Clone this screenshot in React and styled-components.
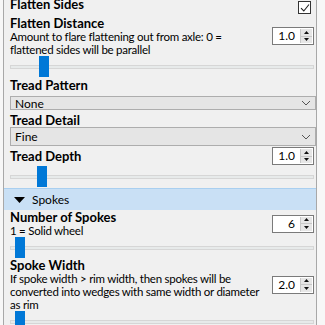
import React from "react";
import styled, { createGlobalStyle } from "styled-components";

const Global = createGlobalStyle`
  html, body {
    margin: 0;
    padding: 0;
    background: #f7f7f7;
    overflow: hidden;
  }
  body {
    font-family: Lato, "Liberation Sans", sans-serif;
    color: #000;
  }
`;

const Panel = styled.div`
  margin-left: 3px;
  width: 312px;
  height: 325px;
  overflow: hidden;
  background: #f0f0f0;
  border-left: 1px solid #a8a8a8;
  border-right: 1px solid #a8a8a8;
`;

const Scroll = styled.div`
  margin-top: -3px;
`;

const Section = styled.div`
  padding: 0 2px 0 6px;
`;

const Field = styled.div`
  display: grid;
  grid-template-columns: 1fr auto;
  column-gap: 6px;
  align-items: center;
  margin-top: ${(p) => p.$top || 0}px;
`;

const Title = styled.div`
  font-weight: 700;
  font-size: 13px;
  line-height: 14px;
  margin-top: ${(p) => p.$top || 0}px;
`;

const Desc = styled.div`
  font-size: 11.5px;
  line-height: 13px;
  letter-spacing: -0.25px;
`;

const CheckBox = styled.div`
  align-self: end;
  width: 11px;
  height: 11px;
  margin: 0 3px -3px 0;
  border: 1px solid #333;
  background: #fff;
  display: flex;
  align-items: center;
  justify-content: center;
`;

const Spin = styled.div`
  display: flex;
  width: 40px;
  height: 16px;
  border: 1px solid #7a7a7a;
  background: #fff;
`;

const SpinValue = styled.div`
  flex: 1;
  font-size: 12px;
  line-height: 16px;
  text-align: right;
  padding-right: 4px;
`;

const SpinArrows = styled.div`
  width: 11px;
  display: flex;
  flex-direction: column;
  border-left: 1px solid #c8c8c8;
  background: #e6e6e6;
  margin: 1px;
`;

const Arrow = styled.div`
  flex: 1;
  display: flex;
  align-items: center;
  justify-content: center;
  & + & {
    border-top: 1px solid #c8c8c8;
  }
`;

const Slider = styled.div`
  position: relative;
  height: 21px;
  margin-top: ${(p) => p.$top || 0}px;
`;

const Track = styled.div`
  position: absolute;
  left: 0;
  right: 0;
  top: 9px;
  height: 2px;
  background: #e7eaea;
  border: 1px solid #d6d6d6;
`;

const Thumb = styled.div`
  position: absolute;
  top: 0;
  width: 10px;
  height: 21px;
  background: #0078d7;
`;

const Combo = styled.div`
  display: flex;
  align-items: center;
  justify-content: space-between;
  height: ${(p) => p.$h}px;
  margin: ${(p) => p.$mt}px -2px 0 0;
  padding: 0 4px;
  background: #e5e5e5;
  border: 1px solid #adadad;
  font-size: 12px;
`;

const Header = styled.div`
  display: flex;
  align-items: center;
  gap: 7px;
  height: 21px;
  margin-top: 1px;
  padding-left: 10px;
  background: #c9e0f5;
  border-top: 1px solid #a9cff0;
  font-size: 12px;
`;

const Check = () => (
  <svg width="10" height="10" viewBox="0 0 10 10">
    <path d="M1 5.2 L3.8 8 L9 1.5" fill="none" stroke="#222" strokeWidth="1.1" />
  </svg>
);

const Chevron = () => (
  <svg width="10" height="6" viewBox="0 0 10 6">
    <path d="M1 1 L5 5 L9 1" fill="none" stroke="#555" strokeWidth="1" />
  </svg>
);

const SpinBox = ({ value }) => (
  <Spin>
    <SpinValue>{value}</SpinValue>
    <SpinArrows>
      <Arrow>
        <svg width="5" height="3" viewBox="0 0 5 3">
          <path d="M0 3 L2.5 0 L5 3 Z" fill="#111" />
        </svg>
      </Arrow>
      <Arrow>
        <svg width="5" height="3" viewBox="0 0 5 3">
          <path d="M0 0 L2.5 3 L5 0 Z" fill="#111" />
        </svg>
      </Arrow>
    </SpinArrows>
  </Spin>
);

const Range = ({ at, top }) => (
  <Slider $top={top}>
    <Track />
    <Thumb style={{ left: at }} />
  </Slider>
);

export default function App() {
  return (
    <>
      <Global />
      <Panel>
        <Scroll>
          <Section>
            <Field>
              <Title>Flatten Sides</Title>
              <CheckBox>
                <Check />
              </CheckBox>
            </Field>
            <Field $top={5}>
              <div>
                <Title>Flatten Distance</Title>
                <Desc>
                  Amount to flare flattening out from axle: 0 = flattened sides will be parallel
                </Desc>
              </div>
              <SpinBox value="1.0" />
            </Field>
            <Range at={29} />
            <Title $top={1}>Tread Pattern</Title>
            <Combo $h={12} $mt={4}>
              None
              <Chevron />
            </Combo>
            <Title $top={3}>Tread Detail</Title>
            <Combo $h={17} $mt={0}>
              Fine
              <Chevron />
            </Combo>
            <Field $top={1}>
              <Title>Tread Depth</Title>
              <SpinBox value="1.0" />
            </Field>
            <Range at={27} top={1} />
          </Section>
          <Header>
            <svg width="11" height="6" viewBox="0 0 11 6">
              <path d="M0 0 L11 0 L5.5 6 Z" fill="#000" />
            </svg>
            Spokes
          </Header>
          <Section>
            <Field>
              <div>
                <Title>Number of Spokes</Title>
                <Desc>1 = Solid wheel</Desc>
              </div>
              <SpinBox value="6" />
            </Field>
            <Range at={5} />
            <Field>
              <div>
                <Title>Spoke Width</Title>
                <Desc>
                  If spoke width &gt; rim width, then spokes will be converted into wedges with same width or diameter as rim
                </Desc>
              </div>
              <SpinBox value="2.0" />
            </Field>
            <Range at={5} />
          </Section>
        </Scroll>
      </Panel>
    </>
  );
}
